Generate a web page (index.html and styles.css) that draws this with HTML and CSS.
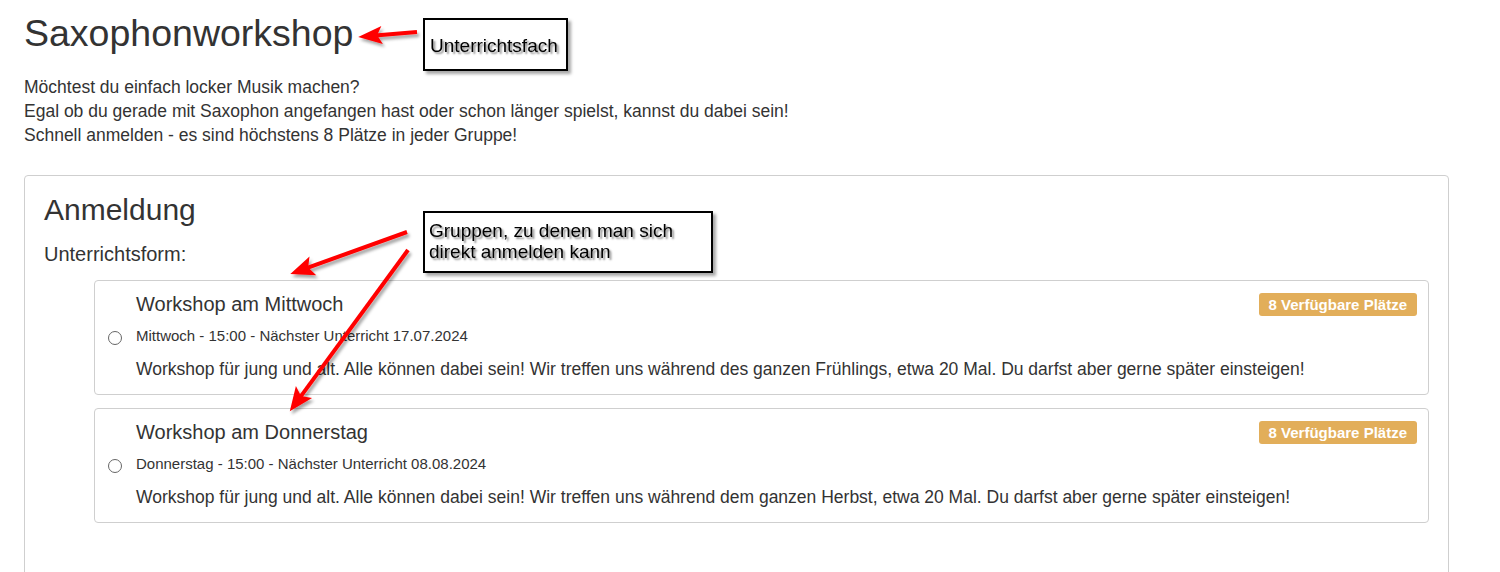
FILE: index.html
```html
<!DOCTYPE html>
<html lang="de">
<head>
  <meta charset="UTF-8" />
  <meta name="viewport" content="width=device-width,initial-scale=1" />
  <title>Saxophonworkshop</title>
  <link rel="stylesheet" href="styles.css">
</head>

<body>
  <div class="page">
    <h1 class="subject">Saxophonworkshop</h1>
    <p class="intro">
      Möchtest du einfach locker Musik machen?<br>
      Egal ob du gerade mit Saxophon angefangen hast oder schon länger spielst, kannst du dabei sein!<br>
      Schnell anmelden - es sind höchstens 8 Plätze in jeder Gruppe!
    </p>

    <section class="panel">
      <h2>Anmeldung</h2>
      <div class="field-label">Unterrichtsform:</div>

      <div class="groups">
        <label class="group">
          <span class="group-radio"><input type="radio" name="group" value="mi" /></span>
          <span class="group-body">
            <span class="group-head">
              <span class="group-title">Workshop am Mittwoch</span>
              <span class="badge">8 Verfügbare Plätze</span>
            </span>
            <span class="group-meta">Mittwoch - 15:00 - Nächster Unterricht 17.07.2024</span>
            <span class="group-desc">Workshop für jung und alt. Alle können dabei sein! Wir treffen uns während des ganzen Frühlings, etwa 20 Mal. Du darfst aber gerne später einsteigen!</span>
          </span>
        </label>

        <label class="group">
          <span class="group-radio"><input type="radio" name="group" value="do" /></span>
          <span class="group-body">
            <span class="group-head">
              <span class="group-title">Workshop am Donnerstag</span>
              <span class="badge">8 Verfügbare Plätze</span>
            </span>
            <span class="group-meta">Donnerstag - 15:00 - Nächster Unterricht 08.08.2024</span>
            <span class="group-desc">Workshop für jung und alt. Alle können dabei sein! Wir treffen uns während dem ganzen Herbst, etwa 20 Mal. Du darfst aber gerne später einsteigen!</span>
          </span>
        </label>
      </div>
    </section>
  </div>

  <!-- annotation layer drawn over the screenshot -->
  <svg class="arrows" width="1500" height="572" viewBox="0 0 1500 572" aria-hidden="true">
    <defs>
      <filter id="shade" x="-20%" y="-20%" width="140%" height="140%">
        <feDropShadow dx="2" dy="3" stdDeviation="1.5" flood-color="#000" flood-opacity="0.35" />
      </filter>
    </defs>
    <g filter="url(#shade)" fill="#f00" stroke="#f00">
      <g transform="translate(417 32) rotate(175.2)">
        <line x1="0" y1="0" x2="42" y2="0" stroke-width="4" />
        <path d="M59 0 L35 -9 L40 0 L35 9 Z" stroke="none" />
      </g>
      <g transform="translate(407 232) rotate(160.25)">
        <line x1="0" y1="0" x2="106" y2="0" stroke-width="4" />
        <path d="M124 0 L100 -10 L105 0 L100 10 Z" stroke="none" />
      </g>
      <g transform="translate(408 250) rotate(126.23)">
        <line x1="0" y1="0" x2="182" y2="0" stroke-width="4" />
        <path d="M200 0 L176 -10 L181 0 L176 10 Z" stroke="none" />
      </g>
    </g>
  </svg>

  <div class="note note-subject">Unterrichtsfach</div>
  <div class="note note-groups">Gruppen, zu denen man sich<br>direkt anmelden kann</div>
</body>
</html>
```

FILE: styles.css
```css
:root {
  --text: #333333;
  --border: #cfcfcf;
  --badge: #e2ae5a;
  --radius: 4px;
}

*, *::before, *::after {
  box-sizing: border-box;
}

body {
  margin: 0;
  position: relative;
  font-family: 'Liberation Sans', Arial, sans-serif;
  font-size: 17.5px;
  line-height: 24px;
  color: var(--text);
  background: #fff;
  overflow: hidden;
}

.page {
  padding: 13px 51px 0 24px;
}

.subject {
  margin: 0;
  font-size: 37.5px;
  font-weight: 400;
  line-height: 1.1;
}

.intro {
  margin: 21px 0 28px;
}

.panel {
  border: 1px solid var(--border);
  border-radius: var(--radius);
  padding: 17px 19px 120px;
}
.panel h2 {
  margin: 0;
  font-size: 30px;
  font-weight: 400;
  line-height: 33px;
}

.field-label {
  margin-top: 16px;
  font-size: 20px;
  line-height: 24px;
}

.groups {
  margin: 14px 0 0 50px;
  display: flex;
  flex-direction: column;
  gap: 13px;
}

.group {
  display: flex;
  border: 1px solid var(--border);
  border-radius: var(--radius);
  cursor: pointer;
}

.group-radio {
  display: flex;
  align-items: center;
  padding: 0 14px 0 13px;
}
.group-radio input {
  appearance: none;
  margin: 0;
  width: 14px;
  height: 14px;
  border: 1px solid #666;
  border-radius: 50%;
  background: #fff;
}
.group-radio input:checked {
  background: radial-gradient(circle, #333 0 3px, #fff 3.5px);
}

.group-body {
  flex: 1;
  display: flex;
  flex-direction: column;
  padding: 11px 11px 13px 0;
}

.group-head {
  display: flex;
  justify-content: space-between;
  align-items: flex-start;
}
.group-title {
  font-size: 20px;
  line-height: 24px;
}

.badge {
  margin-top: 1px;
  padding: 4px 10px;
  background: var(--badge);
  color: #fff;
  font-size: 15px;
  font-weight: 700;
  line-height: 15px;
  border-radius: 3px;
}

.group-meta {
  margin-top: 10px;
  font-size: 15px;
  line-height: 20px;
}

.group-desc {
  margin-top: 11px;
  line-height: 24px;
}

/* annotations */
.arrows {
  position: absolute;
  left: 0;
  top: 0;
  pointer-events: none;
}

.note {
  position: absolute;
  background: #fff;
  border: 2px solid #000;
  box-shadow: 3px 3px 3px rgba(0,0,0,0.35);
  color: #000;
  font-size: 19px;
  line-height: 21px;
  text-shadow: 2px 2px 2px rgba(0,0,0,0.45);
}
.note-subject {
  left: 423px;
  top: 18px;
  width: 145px;
  height: 53px;
  padding: 15px 0 0 5px;
}
.note-groups {
  left: 423px;
  top: 211px;
  width: 290px;
  height: 62px;
  padding: 7px 0 0 4px;
}
```
